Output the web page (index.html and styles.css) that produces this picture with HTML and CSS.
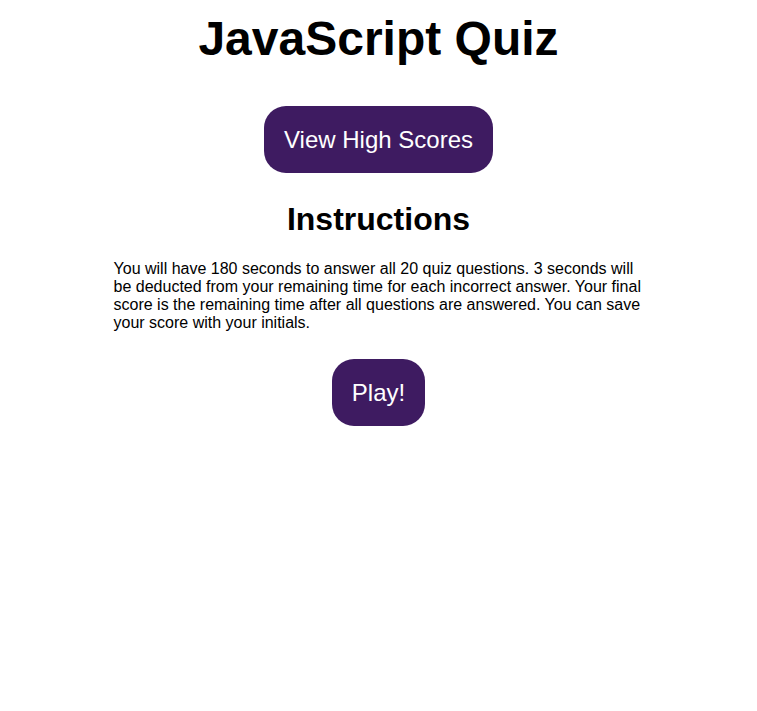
FILE: index.html
```html
<!DOCTYPE html>
<html lang="en">
<head>
<meta charset="utf-8">
<title>JavaScript Quiz</title>
<link rel="stylesheet" href="styles.css">
</head>
<body>
<main class="page">
  <h1 class="title">JavaScript Quiz</h1>
  <button class="btn">View High Scores</button>
  <section class="intro">
    <h2 class="heading">Instructions</h2>
    <p class="text">You will have 180 seconds to answer all 20 quiz questions. 3 seconds will be deducted from your remaining time for each incorrect answer. Your final score is the remaining time after all questions are answered. You can save your score with your initials.</p>
  </section>
  <button class="btn">Play!</button>
</main>
</body>
</html>
```
FILE: styles.css
```css
html, body {
  margin: 0;
  padding: 0;
  background: #fff;
}
body {
  font-family: "Liberation Sans", Arial, Helvetica, sans-serif;
  color: #000;
}
.page {
  display: flex;
  flex-direction: column;
  align-items: center;
}
.title {
  font-size: 48px;
  font-weight: bold;
  margin: 11px 0 39px;
  line-height: 56px;
}
.btn {
  font-family: inherit;
  font-size: 24px;
  line-height: 27px;
  color: #fff;
  background: #3e1b61;
  border: none;
  border-radius: 22px;
  padding: 20px;
  cursor: pointer;
}
.intro {
  width: 70%;
  display: flex;
  flex-direction: column;
  align-items: center;
}
.heading {
  font-size: 32px;
  font-weight: bold;
  line-height: 37px;
  margin: 28px 0 22px;
}
.text {
  font-size: 16px;
  line-height: 18px;
  margin: 0 0 27px;
  align-self: stretch;
}
```
